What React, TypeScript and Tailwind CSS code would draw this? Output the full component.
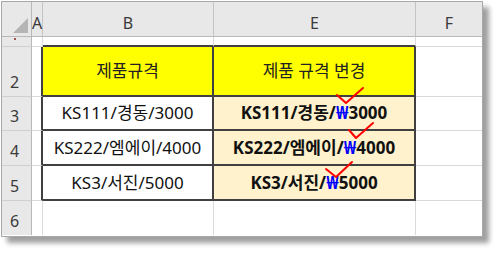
import React from 'react'

const font = { fontFamily: '"Noto Sans", "Noto Sans CJK KR", sans-serif' }

const rows = [
  { n: '3', b: 'KS111/경동/3000', e: ['KS111/경동/', '3000'] },
  { n: '4', b: 'KS222/엠에이/4000', e: ['KS222/엠에이/', '4000'] },
  { n: '5', b: 'KS3/서진/5000', e: ['KS3/서진/', '5000'] },
]

const RowNum = ({ n }: { n: string }) => (
  <div className="flex items-end pl-[8px] pb-[6px] bg-[#e8e8e8] border-r border-b border-r-[#b8b8b8] border-b-[#d0d0d0] text-[16px] leading-none text-[#3a3a3a]">
    {n}
  </div>
)

const ColHead = ({ l, last }: { l: string; last?: boolean }) => (
  <div
    className={
      'flex items-end justify-center pb-[5px] bg-[#e8e8e8] border-b border-b-[#b8b8b8] text-[16px] leading-none text-[#3a3a3a] ' +
      (last ? '' : 'border-r border-r-[#c4c4c4]')
    }
  >
    {l}
  </div>
)

export default function App() {
  return (
    <div className="relative w-[500px] h-[254px] bg-white" style={font}>
      <div className="ml-[1px] mt-[1px] w-[482px] h-[236px] border border-[#a8a8a8] bg-white shadow-[6px_6px_5px_rgba(0,0,0,0.38)]">
        <div className="grid grid-cols-[30px_11px_171px_202px_66px] grid-rows-[35px_10px_50px_34px_35px_35px_34px]">
          {/* header */}
          <div className="flex items-end justify-end pr-[3px] pb-[3px] bg-[#e8e8e8] border-r border-b border-r-[#b8b8b8] border-b-[#b8b8b8]">
            <svg width="15" height="15" viewBox="0 0 15 15">
              <polygon points="0,15 15,15 15,0" fill="#b5b5b5" />
            </svg>
          </div>
          <ColHead l="A" />
          <ColHead l="B" />
          <ColHead l="E" />
          <ColHead l="F" last />

          {/* row 1 */}
          <div className="flex items-end pl-[12px] bg-[#e8e8e8] border-r border-b border-r-[#b8b8b8] border-b-[#d0d0d0]">
            <div className="w-[2px] h-[2px] mb-[6px] bg-[#a05050]" />
          </div>
          <div className="border-r border-b border-[#dadada]" />
          <div className="border-r border-r-[#dadada] border-b-2 border-b-[#404040]" />
          <div className="border-r border-r-[#dadada] border-b-2 border-b-[#404040]" />
          <div className="border-b border-[#dadada]" />

          {/* row 2 */}
          <RowNum n="2" />
          <div className="border-r-2 border-r-[#404040] border-b border-b-[#dadada]" />
          <div className="flex items-center justify-center bg-[#ffff00] border-r-2 border-b-2 border-[#404040] text-[17px] text-[#222]">
            제품규격
          </div>
          <div className="flex items-center justify-center bg-[#ffff00] border-r-2 border-b-2 border-[#404040] text-[17px] text-[#222]">
            제품 규격 변경
          </div>
          <div className="border-b border-[#dadada]" />

          {rows.map((r) => (
            <React.Fragment key={r.n}>
              <RowNum n={r.n} />
              <div className="border-r-2 border-r-[#404040] border-b border-b-[#dadada]" />
              <div className="flex items-center justify-center bg-white border-r-2 border-b-2 border-[#404040] text-[17px] text-[#111]">
                {r.b}
              </div>
              <div className="flex items-center justify-center bg-[#fff2cc] border-r-2 border-b-2 border-[#404040] text-[17px] font-bold text-[#111]">
                {r.e[0]}
                <span className="text-[#0000ff]">₩</span>
                {r.e[1]}
              </div>
              <div className="border-b border-[#dadada]" />
            </React.Fragment>
          ))}

          {/* row 6 */}
          <div className="flex items-end pl-[8px] pb-[6px] bg-[#e8e8e8] border-r border-r-[#b8b8b8] text-[16px] leading-none text-[#3a3a3a]">
            6
          </div>
          <div className="border-r border-[#dadada]" />
          <div className="border-r border-[#dadada]" />
          <div className="border-r border-[#dadada]" />
          <div />
        </div>
      </div>

      {/* red check marks */}
      <svg className="absolute left-0 top-0 pointer-events-none" width="500" height="254">
        <g fill="none" stroke="#ff0000" strokeWidth="2" strokeLinecap="round" strokeLinejoin="round">
          <polyline points="337,94 346,102 363,87" />
          <polyline points="349,129 356,137 373,122" />
          <polyline points="326,168 336,176 352,161" />
        </g>
      </svg>
    </div>
  )
}
